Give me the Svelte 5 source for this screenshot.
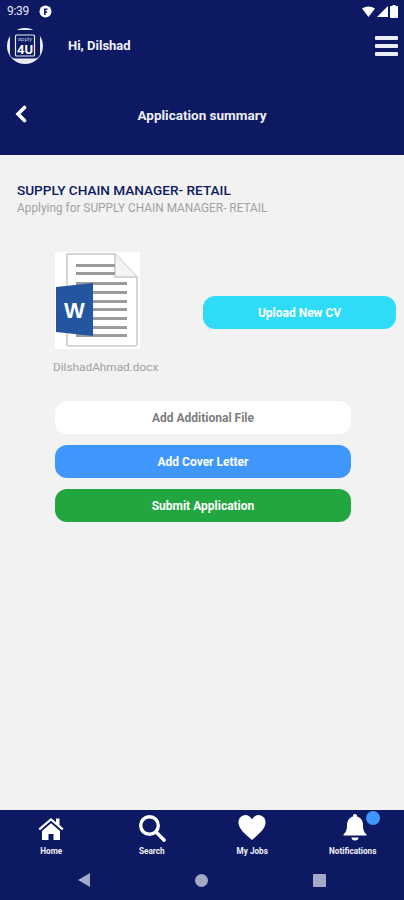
<script>
  const buttons = [
    { label: 'Add Additional File', cls: 'white' },
    { label: 'Add Cover Letter', cls: 'blue' },
    { label: 'Submit Application', cls: 'green' }
  ];
  const tabs = ['Home', 'Search', 'My Jobs', 'Notifications'];
  const docLines = [30, 39, 48, 56, 65, 74, 82];
</script>

<div class="page">
  <header class="top">
    <div class="status">
      <span class="time">9:39</span>
      <span class="status-badge">
        <svg width="13" height="13" viewBox="0 0 13 13">
          <circle cx="6.500" cy="6.500" r="6" fill="#fff" />
          <path d="M5 3.500h3.500v1.600H6.600v1.200h1.600v1.500H6.600V10H5z" fill="#0d1a63" />
        </svg>
      </span>
      <span class="status-icons">
        <svg width="13" height="11" viewBox="0 0 13 11"><path d="M0 2.500 Q6.500 -1.500 13 2.500 L6.500 11z" fill="#fff" /></svg>
        <svg width="11" height="11" viewBox="0 0 11 11"><path d="M11 0v11H0z" fill="#fff" /></svg>
        <svg width="8" height="13" viewBox="0 0 8 13"><path d="M2.500 0h3v1H7a1 1 0 0 1 1 1v10a1 1 0 0 1-1 1H1a1 1 0 0 1-1-1V2a1 1 0 0 1 1-1h1.500z" fill="#fff" /></svg>
      </span>
    </div>

    <div class="greeting">
      <svg class="logo" width="36" height="36" viewBox="0 0 36 36">
        <circle cx="18" cy="18" r="18" fill="#e9ebf4" />
        <rect x="3" y="3.500" width="30" height="27" rx="5" fill="#0d1a63" />
        <rect x="5" y="2" width="26" height="3" fill="#0d1a63" />
        <rect x="8.500" y="7" width="19" height="21" rx="1" fill="#0d1a63" stroke="#e9ebf4" stroke-width="1.200" />
        <text x="18" y="13" text-anchor="middle" class="logo-small">apply</text>
        <text x="18" y="25.500" text-anchor="middle" class="logo-big">4U</text>
      </svg>
      <span class="hi">Hi, Dilshad</span>
      <div class="burger"><i></i><i></i><i></i></div>
    </div>

    <div class="titlebar">
      <svg class="back" width="14" height="18" viewBox="0 0 14 18">
        <path d="M10.500 2.500 4 9l6.500 6.500" fill="none" stroke="#fff" stroke-width="3.600" stroke-linecap="round" stroke-linejoin="miter" />
      </svg>
      <span class="title">Application summary</span>
    </div>
  </header>

  <main class="content">
    <h1>SUPPLY CHAIN MANAGER- RETAIL</h1>
    <p class="sub">Applying for SUPPLY CHAIN MANAGER- RETAIL</p>

    <div class="cv-row">
      <div class="cv-file">
        <div class="thumb">
          <svg width="85" height="97" viewBox="0 0 85 97">
            <rect width="85" height="97" fill="#fff" />
            <path d="M12 2h48l22 23v67a2 2 0 0 1-2 2H14a2 2 0 0 1-2-2z" fill="#fff" stroke="#c9c9c9" stroke-width="1.500" />
            <path d="M60 2v23h22" fill="#f4f4f4" stroke="#c9c9c9" stroke-width="1.500" />
            <g fill="#9c9c9c">
              <rect x="21" y="12" width="39" height="3" />
              <rect x="21" y="20" width="39" height="3" />
              {#each docLines as y}
                <rect x="21" {y} width="51" height="3" />
              {/each}
            </g>
            <path d="M1 35 38 31v53L1 80z" fill="#23569f" />
            <text x="19.500" y="65.500" text-anchor="middle" class="w">W</text>
          </svg>
        </div>
        <span class="file-name">DilshadAhmad.docx</span>
      </div>
      <button class="btn upload">Upload New CV</button>
    </div>

    <div class="actions">
      {#each buttons as b}
        <button class="btn {b.cls}">{b.label}</button>
      {/each}
    </div>
  </main>

  <footer class="bottom">
    <nav class="tabs">
      {#each tabs as t, i}
        <div class="tab">
          <div class="tab-icon">
            {#if i === 0}
              <svg width="28" height="26" viewBox="0 0 28 26">
                <path d="M1.500 13.500 14 3l5 4.200V3.500h3.500v6.600l4 3.400-1.500 1.800L14 5.800 3 15.300z" fill="#fff" />
                <path d="M5 16 14 8.300 23 16v9h-6.500v-6h-5v6H5z" fill="#fff" />
              </svg>
            {:else if i === 1}
              <svg width="28" height="28" viewBox="0 0 28 28">
                <circle cx="11.500" cy="11.500" r="8.800" fill="none" stroke="#fff" stroke-width="3.400" />
                <path d="M18 18l8 8" stroke="#fff" stroke-width="3.600" stroke-linecap="round" />
              </svg>
            {:else if i === 2}
              <svg width="28" height="25" viewBox="0 0 28 25">
                <path d="M14 25C6 18 .5 13.500.5 7.500A7 7 0 0 1 14 4.500 7 7 0 0 1 27.500 7.500C27.500 13.500 22 18 14 25z" fill="#fff" />
              </svg>
            {:else}
              <svg class="bell" width="24" height="27" viewBox="0 0 24 27">
                <path d="M12 0a2 2 0 0 1 2 2.500c4 1 6 4.500 6 8.500 0 5 1 7 3.500 9.500v1H.5v-1C3 18 4 16 4 11c0-4 2-7.500 6-8.500A2 2 0 0 1 12 0z" fill="#fff" />
                <path d="M8.500 23.500h7a3.500 3 0 0 1-7 0z" fill="#fff" />
              </svg>
              <span class="dot"></span>
            {/if}
          </div>
          <span class="tab-label">{t}</span>
        </div>
      {/each}
    </nav>
    <div class="sysnav">
      <svg width="12" height="14" viewBox="0 0 12 14"><path d="M12 0v14L0 7z" fill="#a3a9c6" /></svg>
      <span class="sys-circle"></span>
      <span class="sys-square"></span>
    </div>
  </footer>
</div>

<style>
  :global(body) {
    margin: 0;
    background: #f2f2f2;
  }

  .page {
    width: 404px;
    height: 900px;
    display: flex;
    flex-direction: column;
    font-family: Roboto, "Liberation Sans", sans-serif;
    background: #f2f2f2;
    overflow: hidden;
  }

  .top {
    height: 155px;
    background: #0d1a63;
    color: #fff;
    flex-shrink: 0;
  }

  .status {
    height: 22px;
    display: flex;
    align-items: center;
    padding: 0 6px 0 7px;
  }

  .time {
    font-size: 12px;
    color: #e6e8f2;
    letter-spacing: -0.3px;
  }

  .status-badge {
    display: flex;
    margin-left: 10px;
  }

  .status-icons {
    margin-left: auto;
    display: flex;
    align-items: center;
    gap: 2px;
  }

  .greeting {
    display: flex;
    align-items: center;
    height: 47px;
    padding: 0 6px 0 7px;
  }

  .logo {
    flex-shrink: 0;
  }

  .logo-small {
    font-family: Roboto, sans-serif;
    font-size: 6px;
    fill: #b9bdd6;
  }

  .logo-big {
    font-family: Roboto, sans-serif;
    font-size: 13px;
    font-weight: 700;
    fill: #fff;
  }

  .hi {
    margin-left: 25px;
    font-size: 13px;
    font-weight: 700;
    color: #f1f2f8;
  }

  .burger {
    margin-left: auto;
    width: 23px;
    display: flex;
    flex-direction: column;
    gap: 4px;
  }

  .burger i {
    display: block;
    height: 4px;
    border-radius: 1px;
    background: #eceef6;
  }

  .titlebar {
    position: relative;
    height: 43px;
    margin-top: 24px;
    display: flex;
    align-items: center;
    justify-content: center;
  }

  .back {
    position: absolute;
    left: 14px;
    top: 12px;
  }

  .title {
    font-size: 13.500px;
    font-weight: 700;
    color: #eceef6;
  }

  .content {
    flex: 1;
    padding: 28px 0 0 17px;
    box-sizing: border-box;
  }

  h1 {
    margin: 0;
    font-size: 13.600px;
    font-weight: 500;
    line-height: 15px;
    color: #0d1a63;
  }

  .sub {
    margin: 3px 0 0;
    font-size: 11.850px;
    line-height: 15px;
    color: #a2a2a2;
  }

  .cv-row {
    display: flex;
    align-items: center;
    margin-top: 36px;
    padding-left: 36px;
  }

  .cv-file {
    width: 107px;
    display: flex;
    flex-direction: column;
    align-items: flex-start;
  }

  .thumb {
    margin-left: 2px;
    height: 97px;
  }

  .thumb svg {
    display: block;
  }

  .w {
    font-family: "Liberation Sans", sans-serif;
    font-size: 22px;
    font-weight: 700;
    fill: #fff;
  }

  .file-name {
    margin-top: 11px;
    font-size: 11.800px;
    line-height: 15px;
    color: #a0a0a0;
    white-space: nowrap;
  }

  .btn {
    display: block;
    border: none;
    padding: 0;
    font-family: inherit;
    font-size: 12px;
    font-weight: 700;
    color: #fff;
    text-align: center;
  }

  .upload {
    width: 193px;
    height: 33px;
    margin-left: 43px;
    margin-bottom: 2px;
    border-radius: 12px;
    background: #2fdcf8;
  }

  .actions {
    margin: 26px 0 0 38px;
    width: 296px;
    display: flex;
    flex-direction: column;
    gap: 11px;
  }

  .actions .btn {
    height: 33px;
    border-radius: 12px;
  }

  .white {
    background: #fff;
    color: #7d7d7d;
  }

  .blue {
    background: #3f97fb;
  }

  .green {
    background: #22a63f;
  }

  .bottom {
    height: 90px;
    flex-shrink: 0;
    background: #0d1a63;
    box-sizing: border-box;
    padding-top: 1px;
  }

  .tabs {
    display: grid;
    grid-template-columns: repeat(4, 1fr);
    padding: 0 1px;
  }

  .tab {
    display: flex;
    flex-direction: column;
    align-items: center;
    height: 47px;
  }

  .tab-icon {
    position: relative;
    height: 29px;
    margin-top: 2px;
    display: flex;
    align-items: center;
    justify-content: center;
  }

  .bell {
    margin-left: 4px;
  }

  .dot {
    position: absolute;
    left: 27px;
    top: -2px;
    width: 14px;
    height: 14px;
    border-radius: 50%;
    background: #3f97fb;
  }

  .tab-label {
    font-size: 8.200px;
    font-weight: 700;
    line-height: 12px;
    margin-top: 3px;
    color: #f1f2f8;
  }

  .sysnav {
    display: flex;
    align-items: center;
    justify-content: center;
    height: 44px;
    gap: 105px;
  }

  .sys-circle {
    width: 13px;
    height: 13px;
    border-radius: 50%;
    background: #a3a9c6;
  }

  .sys-square {
    width: 13px;
    height: 13px;
    border-radius: 1px;
    background: #a3a9c6;
  }
</style>
